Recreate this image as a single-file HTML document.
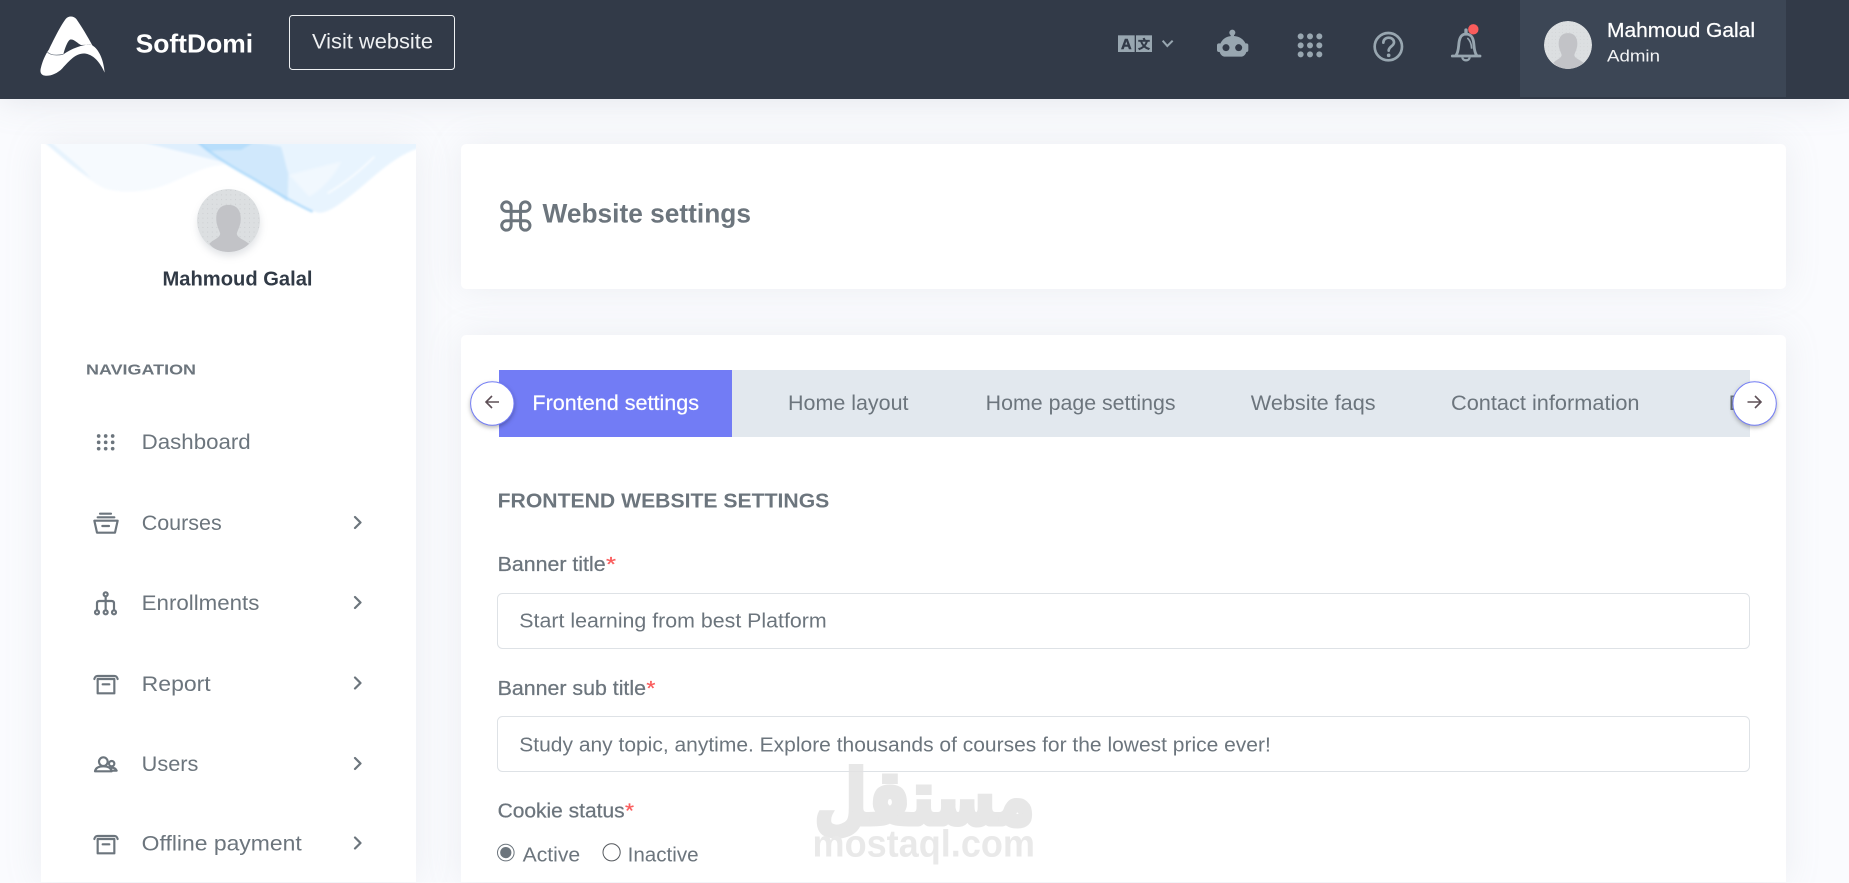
<!DOCTYPE html>
<html lang="en">
<head>
<meta charset="utf-8">
<title>Website settings</title>
<style>
html,body{margin:0;padding:0;width:1849px;height:883px;overflow:hidden;background:#fafbfe;font-family:"Liberation Sans",sans-serif}
.abs{position:absolute}
.header{left:0;top:0;width:1849px;height:99px;background:#323a48;box-shadow:0 0 35px rgba(154,161,171,.25)}
.userbox{left:1520px;top:0;width:266px;height:97px;background:#3c4655}
.side{left:41px;top:144px;width:375px;height:738px;background:#fff;box-shadow:0 0 35px rgba(154,161,171,.15)}
.card1{left:461px;top:144px;width:1325px;height:145px;background:#fff;border-radius:5px;box-shadow:0 0 35px rgba(154,161,171,.15)}
.card2{left:461px;top:335px;width:1325px;height:547px;background:#fff;border-radius:5px 5px 0 0;box-shadow:0 0 35px rgba(154,161,171,.15)}
svg{position:absolute;left:0;top:0}
text{font-family:"Liberation Sans",sans-serif;fill:#6c757d}
.m{font-size:21.5px}
.t{font-size:21px}
.f{font-size:20.5px}
.l{font-size:20.5px;stroke:#6c757d;stroke-width:.25px}
.r{fill:#fa5c5c;font-size:20.5px;stroke:#fa5c5c;stroke-width:.25px}
.ic{fill:none;stroke:#6c757d;stroke-width:6.5;stroke-linecap:round;stroke-linejoin:round}
.ch{fill:none;stroke:#6c757d;stroke-width:2.2;stroke-linecap:round;stroke-linejoin:round}
</style>
</head>
<body>
<div class="abs header"></div>
<div class="abs userbox"></div>
<div class="abs side"></div>
<div class="abs card1"></div>
<div class="abs card2"></div>

<svg width="1849" height="883" viewBox="0 0 1849 883" xmlns="http://www.w3.org/2000/svg">
<defs>
  <pattern id="dots" width="14" height="14" patternUnits="userSpaceOnUse"><circle cx="4" cy="4" r="1.4" fill="#b3b5b8"/></pattern>
  <clipPath id="avc"><circle cx="95" cy="95" r="95"/></clipPath>
  <clipPath id="wc"><rect x="0" y="12" width="1125" height="230"/></clipPath>
  <filter id="bl" x="-5%" y="-5%" width="110%" height="110%"><feGaussianBlur stdDeviation="3.2"/></filter>
  <filter id="bs" x="-30%" y="-30%" width="160%" height="160%"><feGaussianBlur stdDeviation="4"/></filter>
  <g id="av" clip-path="url(#avc)">
    <circle cx="95" cy="95" r="95" fill="#dcdfe1"/>
    <circle cx="95" cy="95" r="95" fill="url(#dots)" opacity=".6"/>
    <path d="M95,48C118,48 132,62 132,90C132,110 122,125 120,135C122,148 140,152 157,165C140,182 118,190 95,190C72,190 50,182 37,165C50,152 68,148 70,135C68,125 58,110 58,90C58,62 72,48 95,48Z" fill="#c2c3c7"/>
  </g>
</defs>

<!-- logo -->
<g transform="translate(35 10) scale(.33333)">
  <path d="M18,172C22,155 30,135 42,118C58,85 78,45 92,27C100,17 115,17 124,27C140,50 158,80 172,106C192,118 206,150 209,188C197,162 180,136 152,131C125,127 105,150 82,175C67,191 44,199 30,197C17,195 14,186 18,172Z" fill="#fff"/>
  <path d="M85,133C90,115 96,96 105,89C115,85 128,100 138,105L170,104C150,101 110,115 85,133Z" fill="#323a48"/>
  <path d="M36,125C45,135 60,138 85,133" fill="none" stroke="#5a6472" stroke-width="2"/>
</g>
<text x="135.6" y="52.3" font-size="26" font-weight="700" style="fill:#fff" textLength="117.5" lengthAdjust="spacingAndGlyphs">SoftDomi</text>
<rect x="289.5" y="15.5" width="165" height="54" rx="3" fill="none" stroke="#eef0f2" stroke-width="1"/>
<text x="312" y="48.5" font-size="21" style="fill:#eef0f2" textLength="121" lengthAdjust="spacingAndGlyphs">Visit website</text>

<!-- top icons -->
<g transform="translate(1110 20) scale(.33333)">
  <rect x="24" y="46" width="50" height="50" fill="#98a6b0"/>
  <rect x="78" y="46" width="48" height="50" fill="#98a6b0"/>
  <text x="49" y="87" font-size="44" font-weight="700" text-anchor="middle" style="fill:#323a48;stroke:#323a48;stroke-width:1.5px">A</text>
  <text x="102" y="86" font-size="36" font-weight="700" text-anchor="middle" style="fill:#323a48;stroke:#323a48;stroke-width:1.5px;font-family:'Noto Sans CJK SC',sans-serif">文</text>
  <path d="M158,62L172,78L188,62" fill="none" stroke="#98a6b0" stroke-width="6"/>
  <circle cx="367" cy="38" r="9" fill="#98a6b0"/>
  <rect x="362" y="40" width="10" height="14" fill="#98a6b0"/>
  <path d="M328,88C328,63 345,48 368,48C392,48 410,63 410,88C410,102 402,110 392,110H346C336,110 328,102 328,88Z" fill="#98a6b0"/>
  <rect x="321" y="70" width="14" height="26" rx="6" fill="#98a6b0"/>
  <rect x="402" y="70" width="13" height="26" rx="6" fill="#98a6b0"/>
  <circle cx="348" cy="83" r="10.5" fill="#323a48"/>
  <circle cx="386" cy="83" r="10.5" fill="#323a48"/>
  <g fill="#98a6b0">
    <circle cx="572" cy="49" r="9"/><circle cx="600" cy="49" r="9"/><circle cx="628" cy="49" r="9"/>
    <circle cx="572" cy="76" r="9"/><circle cx="600" cy="76" r="9"/><circle cx="628" cy="76" r="9"/>
    <circle cx="572" cy="103" r="9"/><circle cx="600" cy="103" r="9"/><circle cx="628" cy="103" r="9"/>
  </g>
</g>
<g transform="translate(1360 20) scale(.33333)">
  <circle cx="85" cy="80" r="41" fill="none" stroke="#98a6b0" stroke-width="8"/>
  <path d="M70,68C70,58 78,53 86,53C95,53 102,59 102,67C102,78 86,80 86,92" fill="none" stroke="#98a6b0" stroke-width="8" stroke-linecap="round"/>
  <circle cx="86" cy="106" r="5.5" fill="#98a6b0"/>
  <path d="M277,108H360M288,106C297,95 295,75 298,62C301,48 309,42 318,42C328,42 337,48 340,62C343,75 341,95 350,106" fill="none" stroke="#98a6b0" stroke-width="8.5" stroke-linecap="round"/>
  <path d="M318,42V30" fill="none" stroke="#98a6b0" stroke-width="10" stroke-linecap="round"/>
  <path d="M322,54C330,60 334,72 335,86" fill="none" stroke="#98a6b0" stroke-width="5"/>
  <path d="M307,112C308,124 328,124 329,112" fill="none" stroke="#98a6b0" stroke-width="7"/>
  <circle cx="340" cy="28" r="15.5" fill="#fa5c5c"/>
</g>
<use href="#av" transform="translate(1544 21) scale(.2526)"/>
<text x="1607" y="37" font-size="20" style="fill:#fff;stroke:#fff;stroke-width:.25px" textLength="148" lengthAdjust="spacingAndGlyphs">Mahmoud Galal</text>
<text x="1607" y="61.5" font-size="16.5" style="fill:#f2f3f5" textLength="53" lengthAdjust="spacingAndGlyphs">Admin</text>

<!-- sidebar wave -->
<g transform="translate(41 140) scale(.33333)" clip-path="url(#wc)">
  <g filter="url(#bl)">
    <path d="M10,6C60,50 130,115 190,145C230,158 300,160 360,140C430,115 490,75 550,75L640,6Z" fill="#f6fafe"/>
    <path d="M10,6C60,50 100,85 150,115C120,80 60,35 30,6Z" fill="#e6f3fd"/>
    <path d="M300,6L640,6L560,70C500,55 400,30 300,6Z" fill="#dfeffd"/>
    <path d="M470,6C510,45 560,72 620,105C680,140 760,195 830,218C860,222 900,190 950,150C1010,100 1060,50 1130,25L1130,6Z" fill="#e8f4fe"/>
    <path d="M470,6H640L720,20C730,50 735,80 742,100L740,185C680,140 600,90 540,60Z" fill="#d0e8fc"/>
    <path d="M470,6H640L600,30C560,30 520,30 500,35Z" fill="#b8defb"/>
    <path d="M745,105C800,90 860,75 900,65C880,110 840,150 805,170C785,150 765,125 745,105Z" fill="#f1f8fe"/>
    <path d="M470,6C520,50 580,85 640,118C690,148 750,185 815,215" fill="none" stroke="#a5d6fa" stroke-width="7" opacity=".85"/>
    <path d="M860,160C910,130 960,90 1000,50" fill="none" stroke="#fff" stroke-width="4"/>
  </g>
</g>
<circle cx="229" cy="225" r="31" fill="#9aa1ab" opacity=".3" filter="url(#bs)"/>
<use href="#av" transform="translate(197 189) scale(.3316)"/>
<text x="162.5" y="285.7" font-size="20" font-weight="700" style="fill:#313a46" textLength="150" lengthAdjust="spacingAndGlyphs">Mahmoud Galal</text>

<!-- sidebar nav -->
<text x="86" y="374.6" font-size="15" font-weight="700" textLength="110" lengthAdjust="spacingAndGlyphs">NAVIGATION</text>
<text class="m" x="141.7" y="449" textLength="109" lengthAdjust="spacingAndGlyphs">Dashboard</text>
<text class="m" x="141.7" y="530" textLength="80" lengthAdjust="spacingAndGlyphs">Courses</text>
<text class="m" x="141.7" y="610" textLength="117.7" lengthAdjust="spacingAndGlyphs">Enrollments</text>
<text class="m" x="141.7" y="691" textLength="69" lengthAdjust="spacingAndGlyphs">Report</text>
<text class="m" x="141.7" y="771" textLength="56.7" lengthAdjust="spacingAndGlyphs">Users</text>
<text class="m" x="141.7" y="850.7" textLength="160" lengthAdjust="spacingAndGlyphs">Offline payment</text>
<path class="ch" d="M355,517L360.5,522.5L355,528M355,597L360.5,602.5L355,608M355,677.5L360.5,683L355,688.5M355,758L360.5,763.5L355,769M355,837.5L360.5,843L355,848.5"/>
<g transform="translate(85 425) scale(.33333)">
  <g fill="#6c757d">
    <circle cx="41" cy="33" r="5.5"/><circle cx="62" cy="33" r="5.5"/><circle cx="83" cy="33" r="5.5"/>
    <circle cx="41" cy="52" r="5.5"/><circle cx="62" cy="52" r="5.5"/><circle cx="83" cy="52" r="5.5"/>
    <circle cx="41" cy="71" r="5.5"/><circle cx="62" cy="71" r="5.5"/><circle cx="83" cy="71" r="5.5"/>
  </g>
  <path class="ic" d="M45,266H78M38,277H88M28,287H98L90,323H36ZM52,303H72"/>
  <path class="ic" d="M62,514V556M36,556V535C36,530 38,528 43,528H80C85,528 87,530 87,535V556"/>
  <circle class="ic" cx="62" cy="508" r="6"/><circle class="ic" cx="36" cy="562" r="6"/><circle class="ic" cx="62" cy="562" r="6"/><circle class="ic" cx="87" cy="562" r="6"/>
</g>
<g transform="translate(85 665) scale(.33333)">
  <path class="ic" d="M28,42C30,36 32,33 38,33H88C94,33 96,36 98,42M38,42H88V85H38ZM53,58H73"/>
  <circle class="ic" cx="55" cy="290" r="13"/><circle class="ic" cx="80" cy="296" r="8"/>
  <path class="ic" d="M30,319C32,308 42,304 55,304C68,304 78,308 80,319ZM80,308C88,308 93,312 95,317H82"/>
  <path class="ic" d="M28,522C30,516 32,513 38,513H88C94,513 96,516 98,522M38,522H88V565H38ZM53,538H73"/>
</g>

<!-- title card -->
<g transform="translate(497 197.2) scale(1.57)">
  <path d="M18 3a3 3 0 0 0-3 3v12a3 3 0 0 0 3 3 3 3 0 0 0 3-3 3 3 0 0 0-3-3H6a3 3 0 0 0-3 3 3 3 0 0 0 3 3 3 3 0 0 0 3-3V6a3 3 0 0 0-3-3 3 3 0 0 0-3 3 3 3 0 0 0 3 3h12a3 3 0 0 0 3-3 3 3 0 0 0-3-3z" fill="none" stroke="#6c757d" stroke-width="1.9"/>
</g>
<text x="542.5" y="222.7" font-size="26.5" font-weight="700" textLength="208.5" lengthAdjust="spacingAndGlyphs">Website settings</text>

<!-- tabs -->
<rect x="499" y="370" width="1251" height="67" fill="#e2e8ee"/>
<rect x="499" y="370" width="233" height="67" fill="#727cf5"/>
<text class="t" x="532.4" y="410" style="fill:#fff;stroke:#fff;stroke-width:.2px" textLength="166.7" lengthAdjust="spacingAndGlyphs">Frontend settings</text>
<text class="t" x="788" y="410" textLength="120.5" lengthAdjust="spacingAndGlyphs">Home layout</text>
<text class="t" x="985.7" y="410" textLength="189.9" lengthAdjust="spacingAndGlyphs">Home page settings</text>
<text class="t" x="1250.8" y="410" textLength="124.8" lengthAdjust="spacingAndGlyphs">Website faqs</text>
<text class="t" x="1451" y="410" textLength="188.5" lengthAdjust="spacingAndGlyphs">Contact information</text>
<text class="t" x="1728.7" y="410">D</text>
<circle cx="492.3" cy="403.5" r="21.7" fill="#fff" stroke="#727cf5" stroke-width="1" style="filter:drop-shadow(0 2px 2px rgba(0,0,0,.28))"/>
<circle cx="1754.6" cy="403.5" r="21.7" fill="#fff" stroke="#727cf5" stroke-width="1" style="filter:drop-shadow(0 2px 2px rgba(0,0,0,.28))"/>
<path d="M499,402H486M492,396L486,402L492,408" fill="none" stroke="#5e5057" stroke-width="1.6"/>
<path d="M1747.5,402H1761M1755,396L1761,402L1755,408" fill="none" stroke="#5e5057" stroke-width="1.6"/>

<!-- form -->
<text x="497.6" y="507.7" font-size="20.5" font-weight="700" textLength="331.7" lengthAdjust="spacingAndGlyphs">FRONTEND WEBSITE SETTINGS</text>

<text class="l" x="497.6" y="571" textLength="108" lengthAdjust="spacingAndGlyphs">Banner title</text>
<text class="r" x="606" y="571" textLength="10" lengthAdjust="spacingAndGlyphs">*</text>
<rect x="497.5" y="593.5" width="1252" height="55" rx="5" fill="#fff" stroke="#dee2e6"/>
<text class="f" x="519.3" y="627.7" textLength="307.4" lengthAdjust="spacingAndGlyphs">Start learning from best Platform</text>

<text class="l" x="497.6" y="695" textLength="148.4" lengthAdjust="spacingAndGlyphs">Banner sub title</text>
<text class="r" x="646.4" y="695" textLength="9" lengthAdjust="spacingAndGlyphs">*</text>
<rect x="497.5" y="716.5" width="1252" height="55" rx="5" fill="#fff" stroke="#dee2e6"/>
<text class="f" x="519.3" y="751.4" textLength="751.5" lengthAdjust="spacingAndGlyphs">Study any topic, anytime. Explore thousands of courses for the lowest price ever!</text>

<text class="l" x="497.6" y="817.7" textLength="127" lengthAdjust="spacingAndGlyphs">Cookie status</text>
<text class="r" x="625" y="817.7" textLength="9" lengthAdjust="spacingAndGlyphs">*</text>
<circle cx="505.8" cy="852.6" r="8.3" fill="#fff" stroke="#6c757d" stroke-width="1"/>
<circle cx="505.8" cy="852.6" r="5.6" fill="#6c757d"/>
<text class="f" x="522.6" y="861.7" textLength="57.6" lengthAdjust="spacingAndGlyphs">Active</text>
<circle cx="611.6" cy="852.3" r="8.6" fill="#fff" stroke="#55595e" stroke-width="1"/>
<text class="f" x="627.6" y="861.7" textLength="71" lengthAdjust="spacingAndGlyphs">Inactive</text>

<!-- watermark -->
<g opacity=".85">
  <text x="812.5" y="824" font-size="76" font-weight="700" style="fill:#e3e3e3;stroke:#e3e3e3;stroke-width:5px;font-family:'DejaVu Sans',sans-serif" direction="rtl" text-anchor="start" textLength="220" lengthAdjust="spacingAndGlyphs" transform="translate(222 0)">مستقل</text>
  <text x="812.5" y="856.7" font-size="38" font-weight="700" style="fill:#e6e6e6" textLength="222.5" lengthAdjust="spacingAndGlyphs">mostaql.com</text>
</g>
</svg>
</body>
</html>
